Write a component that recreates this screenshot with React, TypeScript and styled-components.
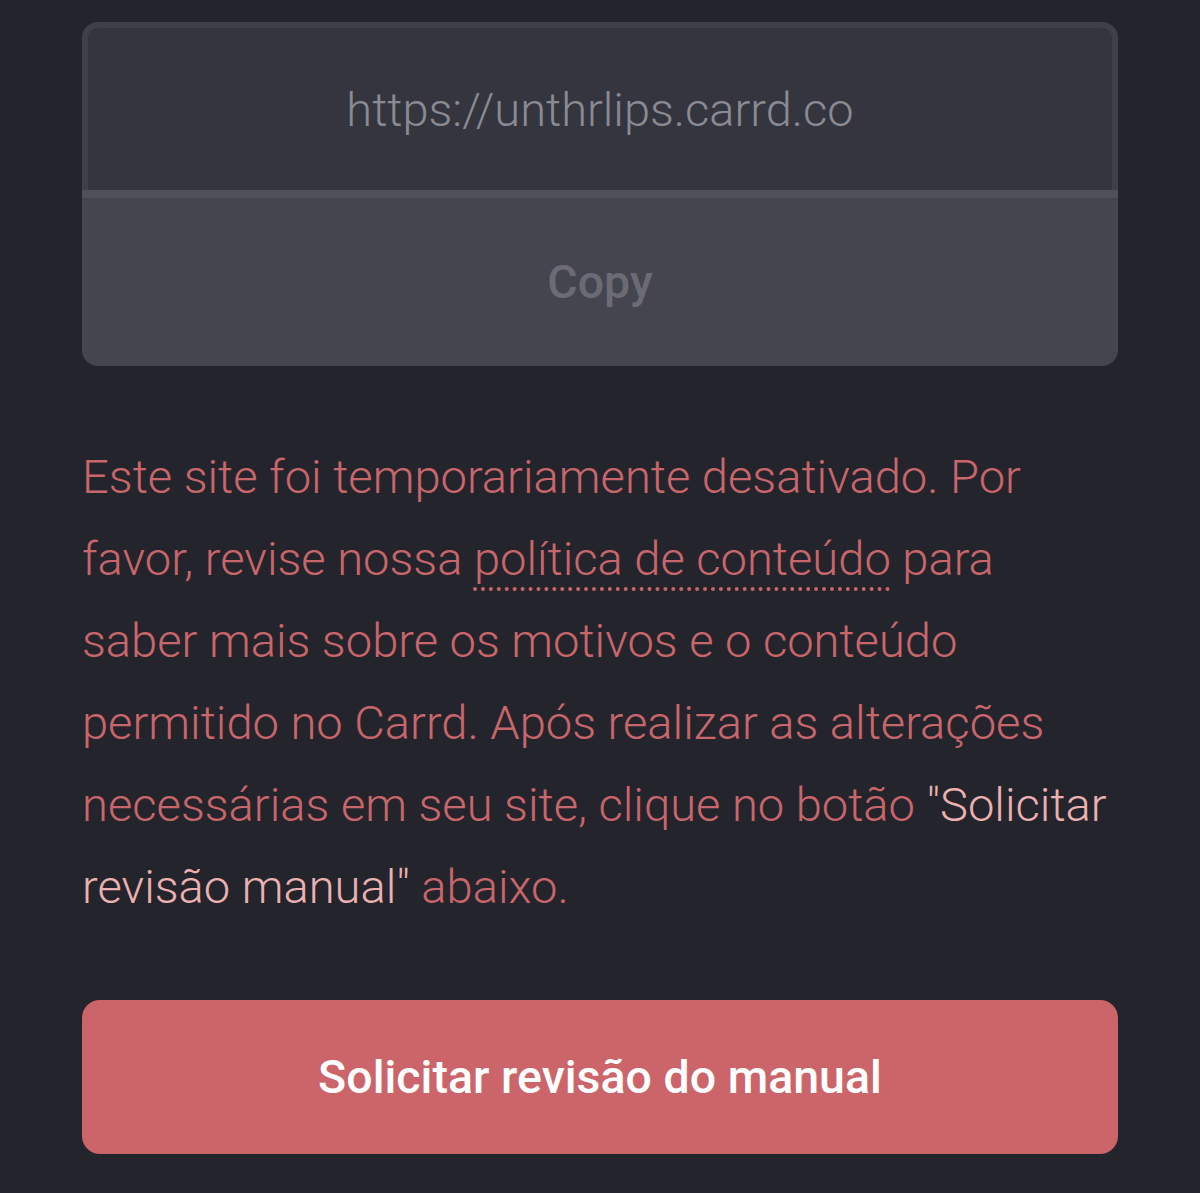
import styled, { createGlobalStyle } from "styled-components";

const GlobalStyle = createGlobalStyle`
  html, body {
    margin: 0;
    padding: 0;
    background: #24242c;
  }
  body {
    font-family: Roboto, "Liberation Sans", sans-serif;
  }
`;

const App = () => {
  return (
    <Page>
      <GlobalStyle />
      <UrlCard>
        <UrlField>https://unthrlips.carrd.co</UrlField>
        <CopyButton>Copy</CopyButton>
      </UrlCard>
      <Notice>
        Este site foi temporariamente desativado. Por favor, revise nossa{" "}
        <PolicyLink>política de conteúdo</PolicyLink> para saber mais sobre os
        motivos e o conteúdo permitido no Carrd. Após realizar as alterações
        necessárias em seu site, clique no botão{" "}
        <Quote>"Solicitar revisão manual"</Quote> abaixo.
      </Notice>
      <ReviewButton>Solicitar revisão do manual</ReviewButton>
    </Page>
  );
};

export default App;

const Page = styled.div`
  width: 1036px;
  margin: 0 auto;
  padding: 22px 0 39px;
  display: flex;
  flex-direction: column;
`;

const UrlCard = styled.div`
  display: flex;
  flex-direction: column;
  border-radius: 16px;
  overflow: hidden;
  background: #45454f;
`;

const UrlField = styled.div`
  height: 162px;
  display: flex;
  align-items: center;
  justify-content: center;
  background: #35353f;
  border: 6px solid #3f3f49;
  border-bottom: none;
  border-radius: 16px 16px 0 0;
  color: #8a8a94;
  font-size: 47px;
  font-weight: 300;
`;

const CopyButton = styled.div`
  height: 168px;
  display: flex;
  align-items: center;
  justify-content: center;
  border-top: 8px solid #50505a;
  color: #6b6b76;
  font-size: 46.5px;
  font-weight: 500;
`;

const Notice = styled.p`
  margin: 70px 0 0;
  padding-right: 6px;
  color: #c9666b;
  font-size: 47.1px;
  font-weight: 300;
  line-height: 82px;
`;

const PolicyLink = styled.span`
  text-decoration: underline dotted #c9666b;
  text-decoration-thickness: 4px;
  text-underline-offset: 12px;
`;

const Quote = styled.span`
  color: #ebb0b0;
`;

const ReviewButton = styled.div`
  margin-top: 72px;
  height: 154px;
  display: flex;
  align-items: center;
  justify-content: center;
  background: #cc6569;
  border-radius: 18px;
  color: #ffffff;
  font-size: 46.5px;
  font-weight: 500;
`;
